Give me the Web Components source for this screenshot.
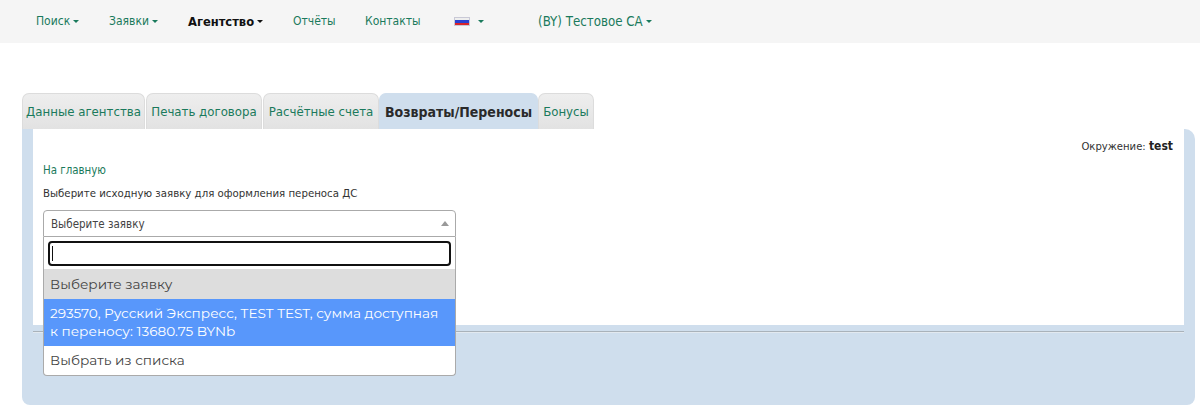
<!DOCTYPE html>
<html lang="ru">
<head>
<meta charset="utf-8">
<title>Возвраты/Переносы</title>
<style>
html, body { margin: 0; padding: 0; background: #fff; }
body { font-family: "DejaVu Sans Condensed", "DejaVu Sans", sans-serif; height: 410px; overflow: hidden; }
</style>
</head>
<body>
<top-nav></top-nav>
<agency-tabs></agency-tabs>
<main-panel>
    <env-note slot="env"></env-note>
    <a-link slot="home">На главную</a-link>
    <request-select slot="select"></request-select>
</main-panel>

<script>
    customElements.define('top-nav', class extends HTMLElement {
        constructor() {
            super()
            const shadowRoot = this.attachShadow({mode: 'open'})
            shadowRoot.innerHTML = `
                <style>
                    :host { display: flex; align-items: center; height: 43px; background: #f5f5f5; padding-left: 36px; font-size: 12px; color: #1a7a5c; box-sizing: border-box; }
                    span.i { display: inline-flex; align-items: center; white-space: nowrap; padding-bottom: 1px; }
                    .c::after { content: ''; margin-left: 3px; border: 3px solid transparent; border-top-color: currentColor; border-bottom-width: 0; }
                    b { color: #111; font-size: 12.8px; }
                    svg { display: block; margin-right: 5px; outline: 1px solid #c9c9d6; outline-offset: -1px; }
                </style>
                <span class="i c" style="width:73px"><span>Поиск</span></span>
                <span class="i c" style="width:79px"><span>Заявки</span></span>
                <span class="i c" style="width:105px;color:#111"><b>Агентство</b></span>
                <span class="i" style="width:72px">Отчёты</span>
                <span class="i" style="width:89px">Контакты</span>
                <span class="i c" style="width:84px">
                    <svg width="16" height="9" viewBox="0 0 16 9"><rect width="16" height="3" fill="#eee"/><rect y="3" width="16" height="3" fill="#2a3fd0"/><rect y="6" width="16" height="3" fill="#d8232a"/></svg>
                </span>
                <span class="i c" style="font-size:13.2px">(BY) Тестовое СА</span>`
        }
    })

    customElements.define('agency-tabs', class extends HTMLElement {
        constructor() {
            super()
            const shadowRoot = this.attachShadow({mode: 'open'})
            const tabs = [['Данные агентства', 123, 1], ['Печать договора', 116, 1], ['Расчётные счета', 116, 0], ['Возвраты/Переносы', 159, 0], ['Бонусы', 56, 0]]
            shadowRoot.innerHTML = `
                <style>
                    :host { display: flex; margin: 50px 0 0 22px; height: 36px; font-size: 13.1px; }
                    div { box-sizing: border-box; border: 1px solid #dcdcdc; border-bottom: 0; border-radius: 7px 7px 0 0; background: linear-gradient(#eeeeee, #e2e2e2); color: #1a7a5c; display: flex; align-items: center; justify-content: center; white-space: nowrap; }
                    .on { background: #cfdeed; border-color: #cfdeed; color: #2a2a2a; font-weight: bold; font-size: 14px; }
                </style>
                ${tabs.map(([t, w, m]) => `<div style="width:${w}px;margin-right:${m}px" class="${t[0] === 'В' ? 'on' : ''}">${t}</div>`).join('')}`
        }
    })

    customElements.define('main-panel', class extends HTMLElement {
        constructor() {
            super()
            const shadowRoot = this.attachShadow({mode: 'open'})
            shadowRoot.innerHTML = `
                <style>
                    :host { display: block; box-sizing: border-box; margin: 0 5px 0 22px; height: 276px; padding: 0 11px; background: #cfdeed; border-radius: 0 10px 8px 8px; }
                    .white { height: 196px; background: #fff; box-sizing: border-box; padding: 10px 11px 0 10px; font-size: 12px; color: #333; }
                    .label { margin-top: 7px; line-height: 16px; font-size: 11.35px; }
                    .home { margin-top: 8px; line-height: 16px; }
                    .env { text-align: right; line-height: 15px; }
                    hr { margin: 6px 0 0; border: 0; border-top: 1px solid #a9b2ba; border-bottom: 1px solid #e2e9f0; }
                    .sel { margin-top: 9px; }
                </style>
                <div class="white">
                    <div class="env"><slot name="env"></slot></div>
                    <div class="home"><slot name="home"></slot></div>
                    <div class="label">Выберите исходную заявку для оформления переноса ДС</div>
                    <div class="sel"><slot name="select"></slot></div>
                </div>
                <hr>`
        }
    })

    customElements.define('env-note', class extends HTMLElement {
        constructor() {
            super()
            const shadowRoot = this.attachShadow({mode: 'open'})
            shadowRoot.innerHTML = `
                <style>
                    :host { display: inline-block; color: #333; font-size: 11.2px; }
                    b { color: #222; font-size: 12px; }
                </style>
                Окружение: <b>test</b>`
        }
    })

    customElements.define('a-link', class extends HTMLElement {
        constructor() {
            super()
            const shadowRoot = this.attachShadow({mode: 'open'})
            shadowRoot.innerHTML = `
                <style>:host { display: inline-block; color: #1a7a5c; font-size: 11.4px; cursor: pointer; }</style>
                <slot></slot>`
        }
    })

    customElements.define('request-select', class extends HTMLElement {
        constructor() {
            super()
            const shadowRoot = this.attachShadow({mode: 'open'})
            shadowRoot.innerHTML = `
                <style>
                    :host { display: block; position: relative; width: 413px; height: 27px; }
                    .box { box-sizing: border-box; height: 27px; border: 1px solid #aaa; border-radius: 4px 4px 0 0; background: #fff; padding-left: 7px; line-height: 27px; font-size: 11.5px; color: #444; position: relative; }
                    .box::after { content: ''; position: absolute; right: 6px; top: 10px; border: 4px solid transparent; border-top-width: 0; border-bottom: 5px solid #999; }
                    .drop { position: absolute; left: 0; right: 0; top: 27px; box-sizing: border-box; height: 139px; background: #fff; border: 1px solid #aaa; border-top: 0; border-radius: 0 0 4px 4px; overflow: hidden; font-family: "Montserrat", Inter, "Noto Sans", sans-serif; font-size: 13.65px; color: #444; line-height: 18px; }
                    .search { padding: 4px 4px 3px; }
                    .search div { box-sizing: border-box; height: 25px; border: 2px solid #111; border-radius: 4px; position: relative; }
                    .search i { position: absolute; left: 2px; top: 3px; width: 1px; height: 15px; background: #111; }
                    .opt { padding: 0 6px; }
                    .grey { background: #ddd; height: 30px; line-height: 30px; }
                    .hl { background: #5897fb; color: #fff; height: 47px; padding-top: 5px; box-sizing: border-box; }
                    .last { height: 30px; line-height: 29px; }
                </style>
                <div class="box">Выберите заявку</div>
                <div class="drop">
                    <div class="search"><div><i></i></div></div>
                    <div class="opt grey">Выберите заявку</div>
                    <div class="opt hl">293570, Русский Экспресс, TEST TEST, сумма доступная к переносу: 13680.75 BYNb</div>
                    <div class="opt last">Выбрать из списка</div>
                </div>`
        }
    })
</script>
</body>
</html>
